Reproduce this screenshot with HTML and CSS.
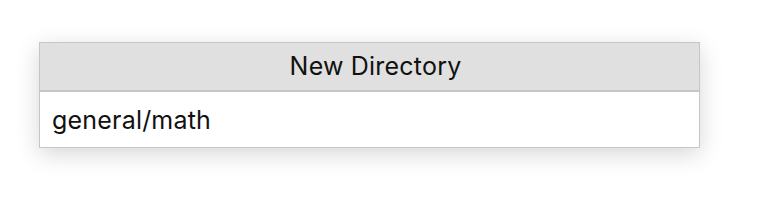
FILE: index.html
```html
<!DOCTYPE html>
<html lang="en">
<head>
  <meta charset="UTF-8">
  <meta name="viewport" content="width=device-width, initial-scale=1.0">
  <title>New Directory</title>
  <link rel="stylesheet" href="styles.css">
</head>
<body>
  <!-- New directory dialog -->
  <div class="dialog">
    <div class="dialog-title">New Directory</div>
    <div class="dialog-body">
      <input type="text" class="dir-input" value="general/math" spellcheck="false">
    </div>
  </div>
</body>
</html>
```

FILE: styles.css
```css
html, body {
  height: 100%;
}

body {
  margin: 0;
  padding-top: 42px;
  box-sizing: border-box;
  background-color: #ffffff;
  font-family: "Inter", "Liberation Sans", sans-serif;
}

.dialog {
  width: 659px;
  margin-left: 39px;
  border: 1px solid #c6c6c6;
  background-color: #ffffff;
  box-shadow: 0 6px 22px rgba(0, 0, 0, 0.16);
}

.dialog-title {
  height: 47px;
  line-height: 47px;
  padding-left: 12px;
  text-align: center;
  font-size: 25px;
  letter-spacing: 0.2px;
  color: #111111;
  background-color: #e0e0e0;
  border-bottom: 2px solid #c6c6c6;
}

.dialog-body {
  height: 55px;
  display: flex;
  align-items: center;
}

.dir-input {
  flex: 1;
  border: none;
  outline: none;
  padding: 0 0 0 12px;
  font-family: inherit;
  font-size: 25px;
  letter-spacing: 0.2px;
  color: #111111;
  background: transparent;
}
```
